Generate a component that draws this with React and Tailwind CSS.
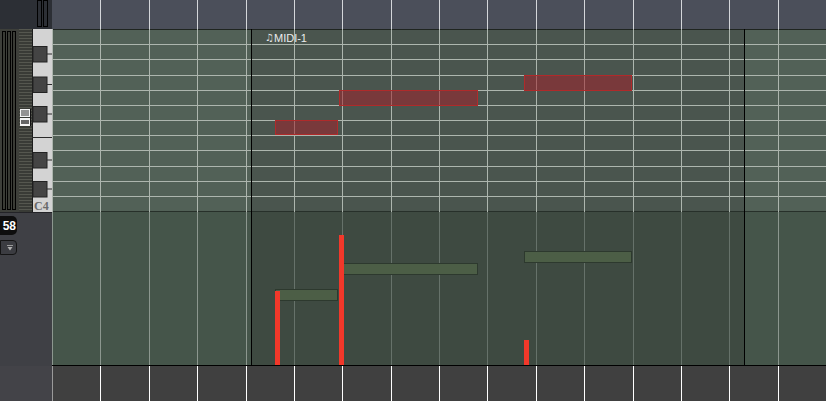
import React from 'react';

const cols = Array.from({ length: 16 }, (_, i) => i);
const rows = Array.from({ length: 12 }, (_, i) => i);

// piano roll notes, relative to the grid origin (52, 29)
const notes = [
  { left: 223, top: 91, width: 63, height: 15 },
  { left: 287, top: 61, width: 139, height: 16 },
  { left: 472, top: 46, width: 108, height: 16 },
];

// controller lane: bars + velocity stems, relative to (52, 212)
const bars = [
  { left: 223, top: 77, width: 63 },
  { left: 287, top: 51, width: 139 },
  { left: 472, top: 39, width: 108 },
];
const stems = [
  { left: 223, top: 79 },
  { left: 287, top: 23 },
  { left: 472, top: 128 },
];

function Keyboard() {
  const blacks = [17.5, 48, 77.5, 123.5, 152.5];
  return (
    <svg width="20" height="183" viewBox="0 0 20 183" className="block">
      <rect x="0" y="0" width="20" height="183" fill="#d3d3d3" />
      <line x1="0.5" y1="0" x2="0.5" y2="183" stroke="#1c1c1c" />
      <line x1="0" y1="108.5" x2="20" y2="108.5" stroke="#2a2a2a" />
      {blacks.map((y) => (
        <g key={y}>
          <rect x="1" y={y} width="14" height="15.5" fill="#444444" stroke="#222" strokeWidth="1" />
          <line x1="15" y1={y + 7.5} x2="20" y2={y + 7.5} stroke="#2a2a2a" />
        </g>
      ))}
      <text x="2" y="181" fontFamily="Liberation Serif, serif" fontSize="12" fontWeight="bold" fill="#6a6a6a">
        C4
      </text>
    </svg>
  );
}

function Handle() {
  return (
    <svg width="12" height="17" viewBox="0 0 12 17" className="block">
      <rect x="0" y="0" width="11" height="8" fill="#f4f4f4" />
      <line x1="1" y1="2" x2="9" y2="2" stroke="#333" />
      <line x1="1" y1="4" x2="9" y2="4" stroke="#333" />
      <line x1="1" y1="6" x2="9" y2="6" stroke="#333" />
      <rect x="0" y="9" width="11" height="8" fill="#f4f4f4" />
      <rect x="1" y="11" width="8" height="4" fill="#666" />
      <line x1="10.5" y1="0" x2="10.5" y2="17" stroke="#111" />
    </svg>
  );
}

export default function App() {
  return (
    <div className="w-[826px] h-[401px] flex overflow-hidden bg-[#404040] font-['Liberation_Sans',Arial,sans-serif]">
      {/* left strip */}
      <div className="w-[52px] flex flex-col shrink-0">
        <div className="h-[29px] bg-[#2c2f35]">
          <div className="flex gap-[1px] pl-[37px] h-[27px]">
            <div className="w-[5px] border border-black" />
            <div className="w-[5px] border border-black" />
          </div>
        </div>
        <div className="h-[183px] flex bg-[#3d3f3a]">
          <div className="w-[17px] flex gap-[1px] pl-[2px] py-[2px]">
            <div className="w-[4px] border border-black bg-[#393b35]" />
            <div className="w-[4px] border border-black bg-[#393b35]" />
            <div className="w-[4px] border border-black bg-[#393b35]" />
          </div>
          <div className="relative w-[15px] pl-[2px]">
            <div className="h-full bg-[repeating-linear-gradient(to_bottom,#55574f_0px,#55574f_1px,#393b36_1px,#393b36_3px)]" />
            <div className="absolute left-[3px] top-[80px]">
              <Handle />
            </div>
          </div>
          <Keyboard />
        </div>
        <div className="h-[154px] bg-[#3f4045] border-t border-[#232327] pt-[3px]">
          <div className="w-[17px] h-[19px] bg-[#0e0e0e] rounded-r-[5px] flex items-center justify-end pr-[1px] text-white text-[12px] font-bold leading-none">
            58
          </div>
          <div className="mt-[5px] w-[17px] h-[15px] border border-[#141414] rounded-r-[4px] bg-[#3b3c41] flex items-center justify-end pr-[3px]">
            <svg width="6" height="6" viewBox="0 0 6 6">
              <line x1="0" y1="0.5" x2="6" y2="0.5" stroke="#999" />
              <path d="M0.5 2 L5.5 2 L3 5.5 Z" fill="#b0b0b0" />
            </svg>
          </div>
        </div>
        <div className="h-[35px] bg-[#434348]" />
      </div>

      {/* main area */}
      <div className="flex-1 flex flex-col">
        {/* top ruler */}
        <div className="h-[29px] grid grid-cols-16 bg-[#4b4f5a]">
          {cols.map((i) => (
            <div key={i} className={i === 0 ? '' : 'border-l border-[#d4d6da]'} />
          ))}
        </div>

        {/* piano roll */}
        <div className="relative h-[183px] bg-[#526157]">
          <div className="absolute inset-y-0 left-[199px] w-[493px] bg-[#4a554e]" />
          <div className="absolute inset-0 flex flex-col border-t border-[#1f2520]">
            {rows.map((i) => (
              <div key={i} className={`flex-1 border-b ${i === 11 ? 'border-[#27302a]' : 'border-[#adb6ae]'}`} />
            ))}
          </div>
          <div className="absolute inset-0 grid grid-cols-16">
            {cols.map((i) => (
              <div key={i} className="border-l border-[#adb6ae]" />
            ))}
          </div>
          <div className="absolute inset-y-0 left-[199px] w-px bg-black" />
          <div className="absolute inset-y-0 left-[692px] w-px bg-black" />
          <div className="absolute left-[213px] top-[3px] text-[11px] leading-[12px] text-[#ececec] flex items-center">
            <span className="font-['DejaVu_Sans',sans-serif] text-[10px]">♫</span>
            <span>MIDI-1</span>
          </div>
          {notes.map((n, i) => (
            <div
              key={i}
              className="absolute border border-[#b02a2a] bg-[#a0232c]/55"
              style={{ left: n.left, top: n.top, width: n.width, height: n.height }}
            />
          ))}
        </div>

        {/* controller lane */}
        <div className="relative h-[154px] bg-[#45554a] border-b border-black">
          <div className="absolute inset-y-0 left-[199px] w-[493px] bg-[#3e4a41]" />
          <div className="absolute inset-0 grid grid-cols-16">
            {cols.map((i) => (
              <div
                key={i}
                className={`border-l ${i >= 5 && i <= 14 ? 'border-[#66726a]' : 'border-[#8c978f]'}`}
              />
            ))}
          </div>
          <div className="absolute inset-y-0 left-[199px] w-px bg-black" />
          <div className="absolute inset-y-0 left-[692px] w-px bg-black" />
          {bars.map((b, i) => (
            <div
              key={i}
              className="absolute h-[12px] border border-[#2d392e] bg-[#4c5e46]"
              style={{ left: b.left, top: b.top, width: b.width }}
            />
          ))}
          {stems.map((s, i) => (
            <div
              key={i}
              className="absolute bottom-0 w-[5px] bg-[#f2382a]"
              style={{ left: s.left, top: s.top }}
            />
          ))}
        </div>

        {/* bottom ruler */}
        <div className="h-[35px] grid grid-cols-16 bg-[#404040]">
          {cols.map((i) => (
            <div key={i} className={`border-l ${i === 0 ? 'border-[#9a9a9a]' : 'border-white'}`} />
          ))}
        </div>
      </div>
    </div>
  );
}
